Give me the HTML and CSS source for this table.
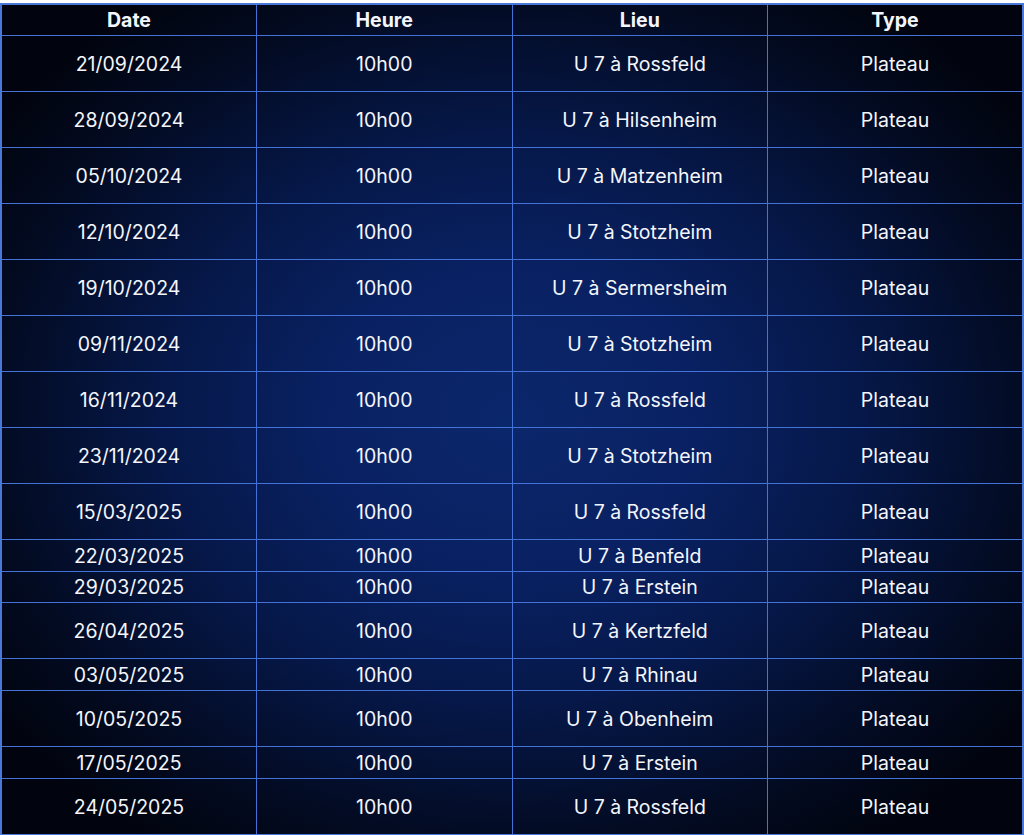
FILE: index.html
```html
<!DOCTYPE html>
<html lang="fr">
<head>
<meta charset="utf-8">
<title>Calendrier U7</title>
<link rel="stylesheet" href="styles.css">
</head>
<body>
<div class="page">
<table class="sched">
  <thead>
    <tr class="head"><th>Date</th><th>Heure</th><th>Lieu</th><th>Type</th></tr>
  </thead>
  <tbody>
    <tr class="tall"><td>21/09/2024</td><td>10h00</td><td>U 7 à Rossfeld</td><td>Plateau</td></tr>
    <tr class="tall"><td>28/09/2024</td><td>10h00</td><td>U 7 à Hilsenheim</td><td>Plateau</td></tr>
    <tr class="tall"><td>05/10/2024</td><td>10h00</td><td>U 7 à Matzenheim</td><td>Plateau</td></tr>
    <tr class="tall"><td>12/10/2024</td><td>10h00</td><td>U 7 à Stotzheim</td><td>Plateau</td></tr>
    <tr class="tall"><td>19/10/2024</td><td>10h00</td><td>U 7 à Sermersheim</td><td>Plateau</td></tr>
    <tr class="tall"><td>09/11/2024</td><td>10h00</td><td>U 7 à Stotzheim</td><td>Plateau</td></tr>
    <tr class="tall"><td>16/11/2024</td><td>10h00</td><td>U 7 à Rossfeld</td><td>Plateau</td></tr>
    <tr class="tall"><td>23/11/2024</td><td>10h00</td><td>U 7 à Stotzheim</td><td>Plateau</td></tr>
    <tr class="tall"><td>15/03/2025</td><td>10h00</td><td>U 7 à Rossfeld</td><td>Plateau</td></tr>
    <tr class="short"><td>22/03/2025</td><td>10h00</td><td>U 7 à Benfeld</td><td>Plateau</td></tr>
    <tr class="short short-b"><td>29/03/2025</td><td>10h00</td><td>U 7 à Erstein</td><td>Plateau</td></tr>
    <tr class="tall"><td>26/04/2025</td><td>10h00</td><td>U 7 à Kertzfeld</td><td>Plateau</td></tr>
    <tr class="short"><td>03/05/2025</td><td>10h00</td><td>U 7 à Rhinau</td><td>Plateau</td></tr>
    <tr class="tall"><td>10/05/2025</td><td>10h00</td><td>U 7 à Obenheim</td><td>Plateau</td></tr>
    <tr class="short"><td>17/05/2025</td><td>10h00</td><td>U 7 à Erstein</td><td>Plateau</td></tr>
    <tr class="tall"><td>24/05/2025</td><td>10h00</td><td>U 7 à Rossfeld</td><td>Plateau</td></tr>
  </tbody>
</table>
</div>
</body>
</html>
```

FILE: styles.css
```css
html, body {
  margin: 0;
  padding: 0;
  background: #ffffff;
}
.page {
  width: 1024px;
  height: 835px;
  padding-top: 3px;
  box-sizing: border-box;
  background: #ffffff;
}
.sched {
  width: 1024px;
  border-collapse: collapse;
  table-layout: fixed;
  font-family: "Inter", "Liberation Sans", sans-serif;
  color: #f4f6fb;
  font-size: 19.5px;
  background: radial-gradient(ellipse 62% 62% at 50% 50%, #0b276b 0%, #092162 30%, #061849 55%, #030b22 82%, #01040e 100%);
  border: 2px solid #4a78d8;
}
.sched th, .sched td {
  border: 1px solid #4572d6;
  text-align: center;
  vertical-align: middle;
  padding: 2px 0 0;
  line-height: 1;
}
.sched th {
  font-weight: 700;
  height: 28px;
}
.tall td {
  height: 53px;
}
.short td {
  height: 29px;
}
.short-b td {
  height: 28px;
}
```
